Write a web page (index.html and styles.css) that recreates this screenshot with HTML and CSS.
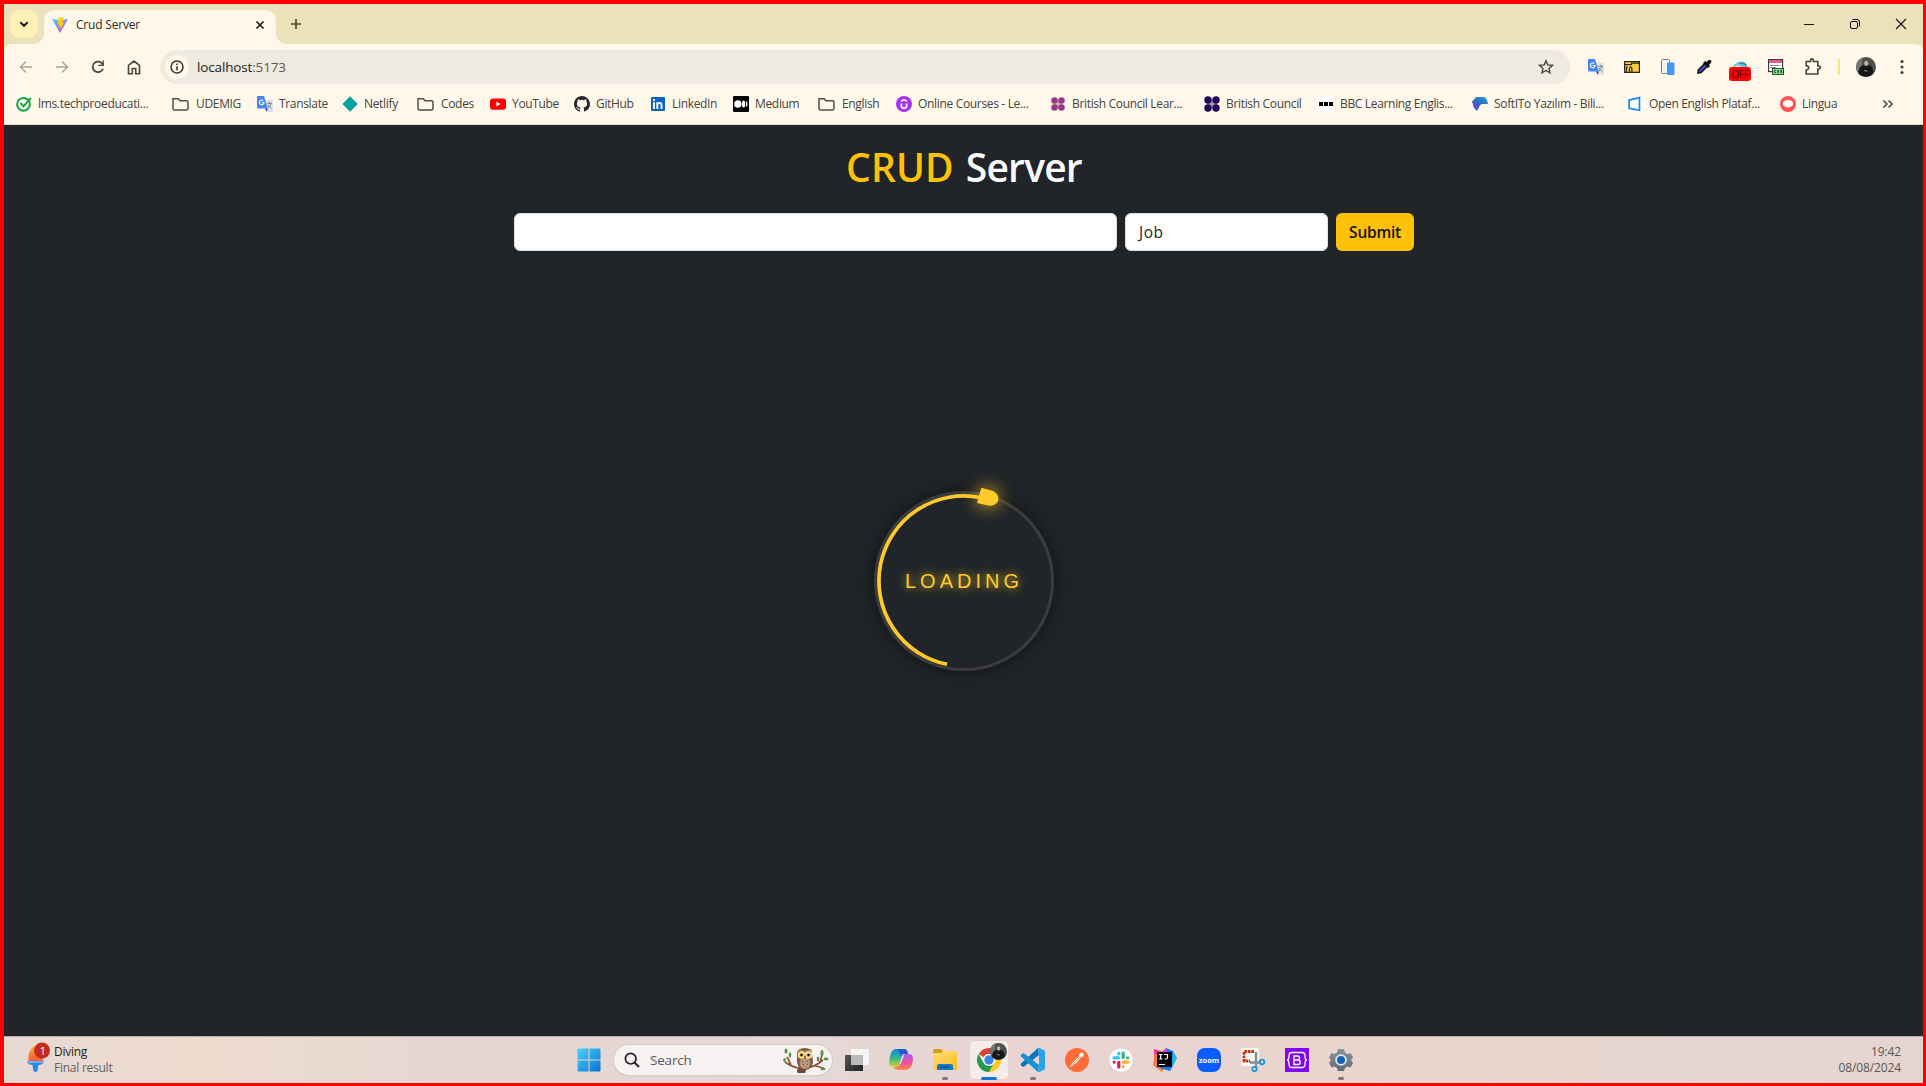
FILE: index.html
```html
<!DOCTYPE html>
<html lang="en">
<head>
<meta charset="utf-8">
<title>Crud Server</title>
<link rel="stylesheet" href="styles.css">
</head>
<body>
<svg class="defs" aria-hidden="true">
  <defs>
    <linearGradient id="gVite" x1="0" y1="0" x2="1" y2="1"><stop offset="0" stop-color="#41d1ff"/><stop offset="1" stop-color="#bd34fe"/></linearGradient>
    <linearGradient id="gBolt" x1="0" y1="0" x2="0" y2="1"><stop offset="0" stop-color="#ffdd35"/><stop offset="1" stop-color="#ffa800"/></linearGradient>
    <linearGradient id="gWin" x1="0" y1="0" x2="1" y2="1"><stop offset="0" stop-color="#4cd3fb"/><stop offset="1" stop-color="#0671ce"/></linearGradient>
    <linearGradient id="gSoft" x1="0" y1="1" x2="1" y2="0"><stop offset="0" stop-color="#3b3fb5"/><stop offset="1" stop-color="#1fa0c8"/></linearGradient>
    <linearGradient id="gCopA" x1="0" y1="0" x2="0" y2="1"><stop offset="0" stop-color="#1188e8"/><stop offset=".5" stop-color="#35b98a"/><stop offset="1" stop-color="#f3d51c"/></linearGradient>
    <linearGradient id="gCopB" x1="0" y1="0" x2="0" y2="1"><stop offset="0" stop-color="#a05cf0"/><stop offset=".55" stop-color="#f0529b"/><stop offset="1" stop-color="#ff8a4c"/></linearGradient>
    <linearGradient id="gFold" x1="0" y1="0" x2="1" y2="1"><stop offset="0" stop-color="#ffe07a"/><stop offset="1" stop-color="#fbbb1c"/></linearGradient>
    <linearGradient id="gFlame" x1="0" y1="0" x2="0" y2="1"><stop offset="0" stop-color="#f9b233"/><stop offset="1" stop-color="#fb5b3c"/></linearGradient>
    <linearGradient id="gBlack" x1="0" y1="0" x2="1" y2="1"><stop offset="0" stop-color="#555"/><stop offset="1" stop-color="#222"/></linearGradient>
    <linearGradient id="gGear" x1="0" y1="0" x2="0" y2="1"><stop offset="0" stop-color="#8b949c"/><stop offset="1" stop-color="#606a73"/></linearGradient>
    <symbol id="folder" viewBox="0 0 18 16"><path d="M1 2.700h5.300l1.800 2H14.500a1.500 1.500 0 0 1 1.500 1.500v6.300a1.500 1.500 0 0 1-1.500 1.500H2.500A1.500 1.500 0 0 1 1 12.500z" fill="none" stroke="#514f45" stroke-width="1.500"/></symbol>
    <symbol id="translate" viewBox="0 0 16 16"><path d="M6 3.500h9.200q.8 0 .8.800V15q0 1-.8 1H10z" fill="#dfe1e5"/><path d="M.8 0H7l3.800 12.500H.8Q0 12.500 0 11.700V.8Q0 0 .8 0z" fill="#4688f1"/><path d="M7.800 12.500h3L9.700 16z" fill="#3057b8"/><path d="M6.300 4.700A2.300 2.300 0 1 0 7 6.500H4.800" fill="none" stroke="#fff" stroke-width="1.100"/><path d="M10 7.300h5M12.500 6v1.300M14 7.500c-.5 2-1.500 3.300-3.200 4.500M11.200 9c.7 1.500 1.600 2.400 3.300 3.400" fill="none" stroke="#72849b" stroke-width="1"/></symbol>
    <symbol id="dots4" viewBox="0 0 16 16"><circle cx="4" cy="4" r="3.700"/><circle cx="12" cy="4" r="3.700"/><circle cx="4" cy="12" r="3.700"/><circle cx="12" cy="12" r="3.700"/><path d="M3 7h10v2H3zM7 3h2v10H7z" opacity=".4"/></symbol>
    <symbol id="face" viewBox="0 0 20 20"><circle cx="10" cy="10" r="10" fill="#4d4f4c"/><path d="M0 10a10 10 0 0 1 6-9v12L1 14z" fill="#74756f"/><path d="M7.300 8C7 3 13 2 13 7.500c3 1.500 4.500 5 4.300 9A10 10 0 0 1 2.500 16.500c0-5 2-7.500 4.800-8.500z" fill="#15171a"/><path d="M7 6.500C6.500 1.500 13.500 1.500 13.200 6.500L12.500 9H8z" fill="#55514e"/><ellipse cx="10.200" cy="6.300" rx="1.900" ry="2.500" fill="#c9b5a9"/><path d="M8 13.500l3.500.8" stroke="#a78e80"/></symbol>
  </defs>
</svg>

<header class="tabstrip">
  <button class="tab-search"><svg width="12" height="12"><path d="M2.300 4.200 6 7.800l3.700-3.600" fill="none" stroke="#1d1b16" stroke-width="1.900"/></svg></button>
  <div class="tab">
    <svg width="16" height="16" viewBox="0 0 16 16"><path d="M0 2 8 16 16 2 8.500 3.400z" fill="url(#gVite)"/><path d="M11.700 0 6 1.200 5.600 8l1.900-.4-.6 3.200 1.400-.5-.8 3.700 5-8.500-2 .4z" fill="url(#gBolt)"/></svg>
    <span class="tab-title">Crud Server</span>
    <svg width="10" height="10"><path d="m1.500 1.500 7 7m0-7-7 7" stroke="#1d1b16" stroke-width="1.700"/></svg>
  </div>
  <svg class="new-tab" width="12" height="12"><path d="M6 1v10M1 6h10" stroke="#4c4633" stroke-width="1.700"/></svg>
  <div class="window-buttons">
    <svg width="12" height="12"><path d="M1 6.500h10" stroke="#111"/></svg>
    <svg width="12" height="12"><rect x="1.500" y="3.500" width="7" height="7" rx="1.500" fill="none" stroke="#111"/><path d="M3.500 1.500H8a2.500 2.500 0 0 1 2.500 2.500v4.500" fill="none" stroke="#111"/></svg>
    <svg width="12" height="12"><path d="m1 1 10 10M11 1 1 11" stroke="#111" stroke-width="1.100"/></svg>
  </div>
</header>

<nav class="toolbar">
  <div class="tools nav-tools">
    <svg width="16" height="16"><path d="M14 8H3M8 2.500 2.500 8 8 13.500" fill="none" stroke="#aaa494" stroke-width="1.500"/></svg>
    <svg width="16" height="16"><path d="M2 8h11M8 2.500 13.500 8 8 13.500" fill="none" stroke="#aaa494" stroke-width="1.500"/></svg>
    <svg width="16" height="16"><path d="M12.800 5.600A5.300 5.300 0 1 0 13 9.700" fill="none" stroke="#494534" stroke-width="1.800"/><path d="M13.900 1.500v5.600H8.300V5.700h4.200V1.500z" fill="#494534"/></svg>
    <svg width="16" height="16"><path d="M2.500 6.300 8 2l5.500 4.300v8.400H9.700V9.500H6.300v5.200H2.500z" fill="none" stroke="#494534" stroke-width="1.600"/></svg>
  </div>
  <div class="omnibox">
    <span class="site-info"><svg width="16" height="16"><circle cx="8" cy="8" r="6" fill="none" stroke="#37352d" stroke-width="1.500"/><path d="M8 7.300v4M8 4.600v1.500" stroke="#37352d" stroke-width="1.600"/></svg></span>
    <span class="url">localhost<i>:5173</i></span>
    <svg width="16" height="16" viewBox="0 0 16 16"><path d="m8 1.700 1.800 4.200 4.700.4-3.500 3.100 1 4.500L8 11.500l-4 2.400 1-4.500-3.500-3.100 4.700-.4z" fill="none" stroke="#494534" stroke-width="1.400"/></svg>
  </div>
  <div class="tools ext-tools">
    <svg width="16" height="16"><use href="#translate"/></svg>
    <svg width="16" height="16"><path d="M.6 2.600h14.800v10.800H.6z" fill="#f9cb45" stroke="#2d2616" stroke-width="1.200"/><path d="M1 5.600h6.500V4.200h7.500M2.500 13V8.200h1.200M5.500 13V9.700q0-1.500 1.200-1.500t1.200 1.500V13" fill="none" stroke="#2d2616" stroke-width="1.200"/></svg>
    <svg width="16" height="16"><rect x="1.500" y=".5" width="8" height="14" rx="1" fill="#eff3f7" stroke="#737f8c"/><rect x="7" y="3.500" width="7.500" height="12.500" rx="1" fill="#4199ee"/></svg>
    <svg width="16" height="16"><path d="m2 14 .5-3L9 4.500 11.500 7 5 13.500z" fill="#3b55d0" stroke="#111" stroke-width="1.600"/><path d="m7 4 2-2 1.500 1L13 .8q3 0 2.200 2.700L13 6l1 1.300-2 1.700z" fill="#111"/></svg>
    <span class="off-ext"><svg width="16" height="9"><path d="M1 8q0-3 3-3.500Q6 2 10 2.500q4 .5 5 5.500H9Q6 5 3 8z" fill="#6ec9dd"/><path d="M6 5q2-2.500 5-1.500 4 .5 4 4.500-4-4-9-3z" fill="#3789b4"/></svg><b>OFF</b></span>
    <svg width="16" height="16"><rect x=".6" y=".6" width="14" height="12" fill="#fff" stroke="#333" stroke-width="1.100"/><path d="M1 1h13v3H1z" fill="#e75b80"/><path d="M2.500 6.500h10m-10 2h5" stroke="#555" stroke-dasharray="2 1"/><rect x="4.500" y="9.500" width="11" height="6" fill="#87dd91" stroke="#274d2d"/><path d="M8 11.500H6.500v2H8M10.800 11.500H9.500v1h1.200v1H9.300M14 11.500h-1.300v1h1.200v1h-1.400" fill="none" stroke="#1a3a1e" stroke-width=".8"/></svg>
    <svg width="16" height="16" viewBox="0 1 16 16"><path d="M2.200 3.500h4.300V2.300a1.300 1.300 0 0 1 2.800 0v1.200h4.500V8h1a1.400 1.400 0 0 1 0 3h-1v5H2.200v-4q2.500-.4 2.500-2.200T2.200 7.600z" fill="none" stroke="#494534" stroke-width="1.600"/></svg>
  </div>
  <span class="divider"></span>
  <svg class="avatar" width="20" height="20"><use href="#face"/></svg>
  <svg class="menu" width="4" height="16"><g fill="#494534"><circle cx="2" cy="2.500" r="1.600"/><circle cx="2" cy="8" r="1.600"/><circle cx="2" cy="13.500" r="1.600"/></g></svg>
</nav>

<nav class="bookmarks">
  <a><svg width="16" height="16"><path fill="#fff" d="M0 0h16v16H0z"/><circle cx="7.500" cy="8.300" r="6.400" fill="none" stroke="#16a637" stroke-width="2"/><path d="m4.500 7 3 3.300L15 2" fill="none" stroke="#16a637" stroke-width="2"/></svg><span>lms.techproeducati...</span></a>
  <a class="dir"><svg width="18" height="16"><use href="#folder"/></svg><span>UDEMIG</span></a>
  <a><svg width="16" height="16"><use href="#translate"/></svg><span>Translate</span></a>
  <a><svg width="16" height="16"><path d="m8 .3 7.700 7.700L8 15.700.3 8z" fill="#05a2a0"/></svg><span>Netlify</span></a>
  <a class="dir"><svg width="18" height="16"><use href="#folder"/></svg><span>Codes</span></a>
  <a><svg width="16" height="16"><rect y="2.400" width="16" height="11.400" rx="3" fill="#f00"/><path d="M6.400 5.700v4.700L10.600 8z" fill="#fff"/></svg><span>YouTube</span></a>
  <a><svg width="16" height="16" viewBox="0 0 16 16"><path fill="#24292f" d="M8 0C3.580 0 0 3.580 0 8c0 3.540 2.290 6.530 5.470 7.590.4.070.55-.17.55-.38 0-.19-.01-.82-.01-1.490-2.010.37-2.530-.49-2.690-.94-.09-.23-.48-.94-.82-1.130-.28-.15-.68-.52-.01-.53.63-.01 1.080.58 1.230.82.72 1.210 1.870.87 2.330.66.070-.52.28-.87.51-1.070-1.780-.2-3.640-.89-3.640-3.950 0-.87.31-1.590.82-2.150-.08-.2-.36-1.020.08-2.120 0 0 .67-.21 2.200.82a7.600 7.600 0 0 1 4 0c1.530-1.040 2.200-.82 2.200-.82.44 1.100.16 1.920.08 2.120.51.56.82 1.270.82 2.150 0 3.070-1.870 3.750-3.650 3.950.29.25.54.73.54 1.480 0 1.070-.01 1.930-.01 2.200 0 .21.15.46.55.38A8 8 0 0 0 8 0z"/></svg><span>GitHub</span></a>
  <a><svg width="16" height="16"><rect x="1" y="1" width="14" height="14" rx="1" fill="#0a66c2"/><path d="M4 6.300V13M4 3v2M7.300 13V6.300M7.300 9q0-2 2.200-2t2 2.500V13" fill="none" stroke="#fff" stroke-width="1.900"/></svg><span>LinkedIn</span></a>
  <a><svg width="16" height="16"><rect width="16" height="16" rx="1" fill="#000"/><ellipse cx="4.800" cy="8" rx="3.700" ry="3.800" fill="#fff"/><ellipse cx="10.600" cy="8" rx="1.700" ry="3.500" fill="#fff"/><ellipse cx="13.700" cy="8" rx=".8" ry="3" fill="#fff"/></svg><span>Medium</span></a>
  <a class="dir"><svg width="18" height="16"><use href="#folder"/></svg><span>English</span></a>
  <a><svg width="16" height="16"><circle cx="8" cy="8" r="8" fill="#a435f0"/><path d="M5 5.300 8 3.600 11 5.300M5.400 7.500v2.600q0 2.200 2.600 2.200t2.600-2.200V7.500" fill="none" stroke="#fff" stroke-width="1.600"/></svg><span>Online Courses - Le...</span></a>
  <a><svg width="16" height="16" fill="#963b81"><use href="#dots4" x="1" y="1" width="14" height="14"/></svg><span>British Council Lear...</span></a>
  <a><svg width="16" height="16" fill="#23085a"><use href="#dots4"/></svg><span>British Council</span></a>
  <a><svg width="16" height="16"><path d="M0 0h16v16H0z" fill="#fff"/><path d="M1 6h4v4H1zm5 0h4v4H6zm5 0h4v4h-4z"/></svg><span>BBC Learning Englis...</span></a>
  <a><svg width="16" height="16"><path d="M4 1h8q3 1 4 7h-5.500Q7 8.500 5.500 14L0 6z" fill="url(#gSoft)"/><path d="M.5 5q0 7 4.500 10 2-4 3-6z" fill="#4b55d5"/></svg><span>SoftITo Yazılım - Bili...</span></a>
  <a><svg width="16" height="16"><path d="M0 0h14v16H0z" fill="#fff"/><path d="M2 4.200 12.500 1.700v12.600L2 12.300z" fill="none" stroke="#1684f8" stroke-width="1.700"/></svg><span>Open English Plataf...</span></a>
  <a><svg width="16" height="16"><circle cx="8" cy="8" r="8" fill="#ff5252"/><path d="M2.800 7.500q.7-3.500 5.200-3.500t5.200 3.500q-.2 3-3.700 3.500L8 12l-1.300-1q-3.700-.4-3.900-3.500z" fill="#fff"/></svg><span>Lingua</span></a>
  <svg class="more" width="12" height="12"><path d="M1.500 2.500 5 6 1.500 9.500m5-7L10 6 6.500 9.500" fill="none" stroke="#494534" stroke-width="1.500"/></svg>
</nav>

<main class="page">
  <h1><span class="accent">CRUD</span> <span class="rest">Server</span></h1>
  <form class="entry">
    <input class="field name" type="text" aria-label="Name">
    <div class="field job">Job</div>
    <button class="submit" type="button">Submit</button>
  </form>
  <div class="loader">
    <span>LOADING</span>
    <svg class="spinner" viewBox="0 0 180 180"><path d="M73 173.300A85 85 0 1 1 107 6.700" fill="none" stroke="#ffca2c" stroke-width="3.700"/><path class="head" d="M107.300-3.300 118-.2c5 1.700 7.300 6 6.100 10-1.300 4-5.500 5.700-11 4.500L103 12z" fill="#ffca2c"/></svg>
  </div>
</main>

<footer class="taskbar">
  <div class="widget">
    <svg width="26" height="30"><path d="M2.500 17Q1 7 9 1q-1 5 3 6 5 3 5 10z" fill="url(#gFlame)"/><path d="M1 17h17q-1 4-5.500 4l-1 6q-2 2-4 0l-1-6Q2 21 1 17z" fill="#2f86ee"/><path d="M1 17h17v2H1z" fill="#63b4fa"/><circle cx="16" cy="6.500" r="8" fill="#c42b1c"/><text x="13.500" y="10.800" font-size="11.500" fill="#fff">1</text></svg>
    <div class="widget-text"><span>Diving</span><span class="sub">Final result</span></div>
  </div>
  <div class="apps">
    <svg class="start" width="24" height="24"><path d="M.5 1.500q0-1 1-1h10v11H.5zm12-1h10q1 0 1 1v10h-11zM.5 12.500h11v11h-10q-1 0-1-1zm12 0h11v10q0 1-1 1h-10z" fill="url(#gWin)"/></svg>
    <div class="search">
      <svg width="16" height="16"><circle cx="6.700" cy="6.700" r="5.300" fill="none" stroke="#222" stroke-width="1.700"/><path d="m10.500 10.500 4.500 4.500" stroke="#222" stroke-width="1.900"/></svg>
      <span>Search</span>
      <svg width="46" height="27" viewBox="0 0 46 27"><g fill="none" stroke="#8a573c" stroke-width="1.700"><path d="M2 15q8 6 16 6 12 1 22-8M31 18.500q5 1 10 3M8 18 4 10M37 15l2-7"/></g><path d="M15 21q-2 4 0 5h7l2-5z" fill="#714335"/><path d="M14 7q0-6 8-6 7 0 7 6l1 9q-2 7-8 7-7-1-8-8z" fill="#7d5542"/><path d="M15 2l7 2 7-2-2 5h-9z" fill="#b18a55"/><ellipse cx="22" cy="16" rx="5.500" ry="6" fill="#b7967b"/><circle cx="18.500" cy="8" r="3.800" fill="#eee2ae"/><circle cx="25.500" cy="8" r="3.800" fill="#eee2ae"/><circle cx="18.500" cy="8" r="2.200" fill="#edbd18"/><circle cx="25.500" cy="8" r="2.200" fill="#edbd18"/><circle cx="18.500" cy="8" r="1.200"/><circle cx="25.500" cy="8" r="1.200"/><path d="m21 10 1-2 1 2-1 2z" fill="#6b472f"/><path d="M19 14l1 1m4-1 1 1m-5 2 1 1m3-1 1 1" stroke="#684536"/><g fill="#5e8d4b"><ellipse cx="3" cy="4" rx="1.500" ry="2.500"/><ellipse cx="7" cy="8" rx="1.300" ry="2.800"/><ellipse cx="1.500" cy="13" rx="1.300" ry="2"/><ellipse cx="39" cy="6" rx="1.500" ry="3"/><ellipse cx="43" cy="12" rx="2.500" ry="1.400"/><ellipse cx="35" cy="12" rx="1.300" ry="2.500"/><ellipse cx="40" cy="22" rx="2.500" ry="1.200"/></g></svg>
    </div>
    <div class="icons">
      <a><svg width="24" height="24" viewBox="0 0 24 24"><path d="M0 7h18v16H0z" fill="url(#gBlack)"/><path d="M6 1h18v16H6z" fill="#f7f6f5" opacity=".95"/><path d="M6 7h12v10H6z" fill="#bcbab9"/></svg></a>
      <a><svg width="24" height="24" viewBox="0 0 24 24"><path d="M7 1h8q3 0 4 4H14l-4 13q-1 3-4 1-6 0-6-4Q1 1 7 1z" fill="url(#gCopA)"/><path d="M9 1h6q3 0 4 5h-4q-3 0-3 3z" fill="#235ac9"/><path d="M16 6h4q4 0 4 5-1 11-7 11H9q-3 0-4-3h3q2 0 3-3l3-8q1-2 2-2z" fill="url(#gCopB)"/><path d="m13 8-3 9 2-2 3-7z" fill="#fff" opacity=".6"/></svg></a>
      <a class="running"><svg width="24" height="24" viewBox="0 0 24 24"><path d="M0 3q0-2 2-2h6l2 2v4H0z" fill="#d99a10"/><path d="M0 5h8l2-2h12q2 0 2 2v17H0z" fill="url(#gFold)"/><path d="M4 22v-4q0-2 2-2h12q2 0 2 2v4z" fill="#1777c8"/><path d="M7.500 19h9" stroke="#0a4b8d" stroke-width="1.500"/></svg></a>
      <a class="active"><svg width="32" height="32" viewBox="0 0 32 32"><circle cx="15" cy="16" r="12" fill="#fff"/><path d="M4.600 10A12 12 0 0 1 25.400 10H15q-4 0-5 3.500z" fill="#dc4437"/><path d="M25.400 10A12 12 0 0 1 15 28l5.200-9q1.800-3-.7-9z" fill="#fccb20"/><path d="M4.600 10A12 12 0 0 0 15 28l5.200-9q-5 5-10.400 0z" fill="#24994c"/><circle cx="15" cy="16" r="6" fill="#fff"/><circle cx="15" cy="16" r="4.700" fill="#3d84e9"/><use href="#face" x="16" y="-1" width="17" height="17"/></svg></a>
      <a class="running"><svg width="24" height="24" viewBox="0 0 24 24"><path d="M17 0 0 15.500q-.8 1 0 1.700l1.500 1.300q.8.600 1.700 0L18 7z" fill="#0877b9"/><path d="M17 24 0 8.500q-.8-1 0-1.700l1.500-1.300q.8-.6 1.700 0L18 17z" fill="#1592d5"/><path d="M17 0q.8-.2 1.400 0L23 2.200q1 .5 1 1.500v16.600q0 1-1 1.500L18.400 24q-.6.200-1.400 0l1-7V7z" fill="#27a5ea"/></svg></a>
      <a><svg width="24" height="24"><circle cx="12" cy="12" r="12" fill="#ff6c37"/><path d="m4.500 19.500 4-2.500-1.500-1.500z" fill="#fff"/><path d="m7.500 14.500 6.500-6q0-3.500 2.500-4 3 .5 2 3-1 1.500-2.500 1.800L10.500 16l-3 .5z" fill="#fff"/><path d="M8 16.500 15.500 8.500" stroke="#ff6c37" stroke-width=".7"/></svg></a>
      <a><svg width="24" height="24"><circle cx="12" cy="12" r="11.500" fill="#fff"/><g fill="none" stroke-width="3.300" stroke-linecap="round"><path d="M5 9.800H9.500M9.800 5.300v.6" stroke="#36c5f0"/><path d="M14.200 5.200V9.600M18.700 9.800v.01" stroke="#2eb67d"/><path d="M14.400 14.200H19M14.200 18.700v.01" stroke="#ecb22e"/><path d="M9.800 14.400V19M5.200 14.200v.01" stroke="#e01e5a"/></g></svg></a>
      <a><svg width="24" height="24"><path d="m1 1 10 3-3 16-7-6z" fill="#ff318c"/><path d="m2 5-2 12 9 7 5-7z" fill="#fd7b35"/><path d="m13 0 7 3 3 8-6 12-10-3z" fill="#087cfa"/><path d="M13 0 8 5l8 2z" fill="#e935e8"/><path d="m20 3 4 7-6 12z" fill="#1eb5e8"/><path d="M4 4h15v15H4z"/><path d="M6 6.500h3.500M7.700 6.500v4.500m-1.700 0h3.500M11 6.500h3.500v3q0 1.500-1.500 1.500h-1.500M6 16.500h6" fill="none" stroke="#fff" stroke-width="1.200"/></svg></a>
      <a class="zoom">zoom</a>
      <a><svg width="26" height="24"><rect x="1" width="18" height="18" rx="2" fill="#f9f9f9"/><path d="M14 3.500H4V13h6" fill="none" stroke="#c93711" stroke-width="2.800" stroke-dasharray="2.800 .7"/><path d="M16 4v16M10 14.500h11" stroke="#858c92" stroke-width="2.400"/><circle cx="22" cy="14" r="2.300" fill="none" stroke="#1196df" stroke-width="1.700"/><circle cx="14.500" cy="21" r="2.200" fill="none" stroke="#1196df" stroke-width="1.700"/></svg></a>
      <a><svg width="24" height="24"><rect width="24" height="24" fill="#8008f5"/><path d="M7 4.500Q4 4.500 4 8q0 4-2 4 2 0 2 4 0 3.500 3 3.500h10q3 0 3-3.500 0-4 2-4-2 0-2-4 0-3.500-3-3.500zM9 8v8.500h4q2.200 0 2.200-2.200T13 12H9h3.500q2 0 2-2t-2-2z" fill="none" stroke="#fff" stroke-width="1.300"/></svg></a>
      <a class="running"><svg width="24" height="24" viewBox="0 0 24 24"><path d="M9 1h6l1 3.500 2.500 1.500 3-1L24 9.500l-2 2.500 2 3-2.500 4.500-3-1L16 20l-1 3H9l-1-3-2.500-1.500-3 1L0 15l2-3-2-2.500L2.500 5l3 1L8 4.500z" fill="url(#gGear)"/><circle cx="12" cy="12" r="5.800" fill="#e8e6e5"/><circle cx="12" cy="12" r="4" fill="#1062b5"/></svg></a>
    </div>
  </div>
  <div class="clock"><span>19:42</span><span>08/08/2024</span></div>
</footer>
</body>
</html>
```
FILE: styles.css
```css
* { box-sizing: border-box; }
html { height: 100%; }
body {
  margin: 0;
  width: 1926px;
  height: 1086px;
  border: solid #f00;
  border-width: 4px 3px 3px 4px;
  display: flex;
  flex-direction: column;
  overflow: hidden;
  background: #ebe2bb;
  font-family: "Open Sans", "Noto Sans", sans-serif;
  font-size: 12px;
  color: #45433b;
}
svg { display: block; flex: none; overflow: visible; }
.defs { position: absolute; width: 0; height: 0; }
button { border: 0; padding: 0; font: inherit; }

/* tab strip */
.tabstrip { height: 40px; flex: none; display: flex; align-items: center; background: #ebe2bb; }
.tab-search {
  width: 28px; height: 28px; margin: 0 6px 0 6px;
  display: grid; place-items: center;
  border-radius: 10px; background: #fff0b5;
}
.tab {
  position: relative;
  width: 232px; height: 34px; align-self: flex-end;
  display: flex; align-items: center;
  padding: 0 11px 5px 8px;
  border-radius: 10px 10px 0 0; background: #fff8ea;
}
.tab::before, .tab::after {
  content: ""; position: absolute; bottom: 0; width: 10px; height: 10px;
}
.tab::before { left: -10px; background: radial-gradient(circle at 0 0, #ebe2bb 9.500px, #fff8ea 10px); }
.tab::after { right: -10px; background: radial-gradient(circle at 100% 0, #ebe2bb 9.500px, #fff8ea 10px); }
.tab-title { flex: 1; margin-left: 8px; padding-bottom: 1px; color: #2b2922; letter-spacing: -.2px; }
.new-tab { margin-left: 14px; }
.window-buttons { margin-left: auto; margin-right: 16px; display: flex; gap: 34px; }

/* toolbar */
.toolbar {
  height: 40px; flex: none; display: flex; align-items: center;
  padding: 6px 19px 0 14px;
  background: #fff8ea; border-radius: 8px 8px 0 0;
}
.tools { display: flex; align-items: center; gap: 20px; }
.omnibox {
  width: 1411px; height: 34px; margin-left: 18px;
  display: flex; align-items: center; padding: 0 16px 0 5px;
  border-radius: 17px; background: #eee9e1;
}
.site-info { width: 24px; height: 24px; display: grid; place-items: center; border-radius: 50%; background: #fff8ea; }
.url { flex: 1; margin-left: 8px; font-size: 13.500px; letter-spacing: -.15px; color: #1f1d18; }
.url i { font-style: normal; color: #5c594f; }
.ext-tools { margin-left: 18px; }
.off-ext { position: relative; width: 16px; height: 16px; }
.off-ext b {
  position: absolute; left: -3px; top: 8px; width: 22px; height: 14px;
  border-radius: 3px; background: #f00; color: #3a0a0a;
  font: 500 10px/15px "Open Sans", sans-serif; text-align: center; letter-spacing: -.4px;
}
.divider { width: 2px; height: 16px; margin-left: 18px; background: #f7e383; }
.avatar { margin-left: 16px; }
.menu { margin-left: 24px; }

/* bookmarks */
.bookmarks {
  height: 41px; flex: none; display: grid; align-items: center;
  grid-template-columns: 156px 85px 85px 75px 73px 84px 76px 83px 85px 78px 154px 154px 114px 154px 155px 153px 102px 12px;
  padding: 0 0 0 12px;
  background: #fff8ea; border-bottom: 1px solid #e5dcc0;
}
.bookmarks a { display: flex; align-items: center; gap: 6px; white-space: nowrap; letter-spacing: -.33px; }
.bookmarks a span { padding-bottom: 2px; }
.bookmarks .dir { gap: 6px; }

/* page */
.page {
  height: 911px; flex: none; background: #212529;
  display: flex; flex-direction: column; align-items: center;
  padding-top: 18px; padding-left: 1px;
}
h1 { margin: 0 0 22px; font-size: 39px; line-height: 48px; font-weight: 600; color: #f8f9fa; white-space: nowrap; letter-spacing: -.55px; word-spacing: 2.500px; }
.accent { color: #ffc107; letter-spacing: .1px; }
.rest { letter-spacing: -.8px; }
.entry { display: flex; gap: 8px; width: 900px; margin: 0; }
.field {
  height: 38px; padding: 0 12px; border: 1px solid #dee2e6; border-radius: 6px;
  background: #fff; color: #212529; font: 15.500px/36px "Open Sans", sans-serif;
}
.name { width: 603px; }
.job { width: 203px; padding-left: 13px; letter-spacing: .5px; }
.submit { width: 78px; height: 38px; border-radius: 6px; background: #ffc107; color: #111; font-size: 15.500px; font-weight: 600; letter-spacing: -.25px; }
.loader {
  position: relative; width: 180px; height: 180px; margin-top: 240px; flex: none;
  display: grid; place-items: center;
  border: 3px solid #3c3c3c; border-radius: 50%;
  box-shadow: 0 0 20px rgba(0, 0, 0, .5);
  font: 20px "Liberation Sans", Arial, sans-serif; letter-spacing: 4px;
  color: #ffca2c; text-shadow: 0 0 10px #ffca2c;
}
.spinner { position: absolute; left: -3px; top: -3px; width: 180px; height: 180px; }
.head { filter: drop-shadow(0 0 9px #ffca2c); }

/* taskbar */
.taskbar {
  flex: 1; display: flex; align-items: center; padding: 0 22px 0;
  border-top: 1px solid #b9aaa6;
  background: linear-gradient(90deg, #e8d8d3 0, #eedccf 10%, #e5d6d2 24%, #e5d8d5 42%, #e8d3d2 55%, #ead6cc 72%, #e7d6d1 88%, #e5d5d1);
}
.widget { width: 545px; display: flex; align-items: center; }
.widget svg { margin-top: -3px; }
.widget-text { display: flex; flex-direction: column; margin: -1px 0 0 2px; line-height: 16px; color: #1f1d1c; font-size: 12px; letter-spacing: -.25px; }
.widget-text .sub { color: #65605e; }
.apps { display: flex; align-items: center; }
.start { margin-left: 6px; }
.search {
  width: 218px; height: 30px; margin-left: 13px; padding: 0 3px 0 10px;
  display: flex; align-items: center;
  border-radius: 15px; background: #f6f2f1; box-shadow: 0 0 0 1px #dccdca, 0 1px 1px #a99c99;
}
.search span { flex: 1; margin-left: 10px; padding-bottom: 1px; font-size: 13.500px; letter-spacing: -.2px; color: #5d5957; }
.icons { display: flex; margin-left: 3px; }
.icons a { position: relative; width: 44px; height: 40px; display: grid; place-items: center; }
.running::after, .active::after {
  content: ""; position: absolute; left: 19px; bottom: 0; width: 6px; height: 3px; border-radius: 2px; background: #817775;
}
.active::before {
  content: ""; position: absolute; left: 3px; top: 1px; width: 38px; height: 38px;
  border-radius: 4px; background: #f5ecea; box-shadow: 0 0 1px #bbaeab;
}
.active svg { position: relative; left: 1px; }
.active::after { left: 14px; width: 16px; background: #0c78d4; }
.icons .zoom {
  width: 24px; height: 24px; margin: 8px 10px; border-radius: 8px; background: #0b5cff;
  color: #fff; font: bold 7.500px/20px "Open Sans", sans-serif;
}
.clock { margin: -1px 0 0 auto; display: flex; flex-direction: column; text-align: right; line-height: 16px; letter-spacing: -.12px; color: #5b5553; }
```
